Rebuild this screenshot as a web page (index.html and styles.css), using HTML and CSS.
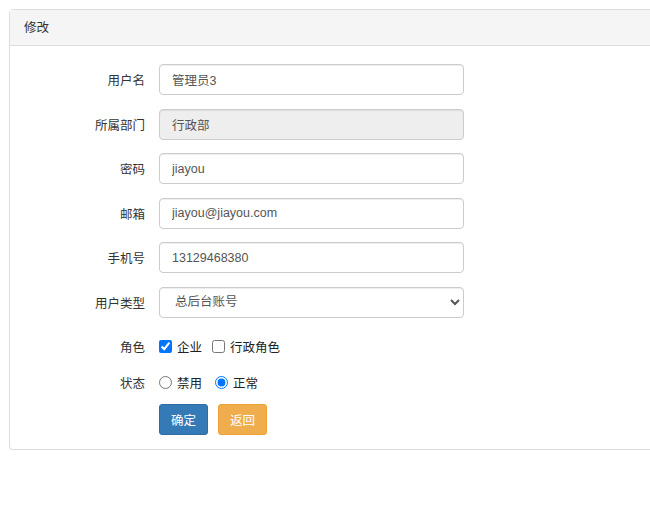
FILE: index.html
```html
<!DOCTYPE html>
<html lang="zh">
<head>
<meta charset="utf-8">
<title>修改</title>
<link rel="stylesheet" href="styles.css">
</head>
<body>
<div class="panel">
  <div class="panel-heading">修改</div>
  <form class="panel-body">
    <div class="row">
      <label class="label">用户名</label>
      <input class="control" type="text" value="管理员3">
    </div>
    <div class="row">
      <label class="label">所属部门</label>
      <input class="control" type="text" value="行政部" disabled>
    </div>
    <div class="row">
      <label class="label">密码</label>
      <input class="control" type="text" value="jiayou">
    </div>
    <div class="row">
      <label class="label">邮箱</label>
      <input class="control" type="text" value="jiayou@jiayou.com">
    </div>
    <div class="row">
      <label class="label">手机号</label>
      <input class="control" type="text" value="13129468380">
    </div>
    <div class="row">
      <label class="label">用户类型</label>
      <select class="control select">
        <option>总后台账号</option>
      </select>
    </div>
    <div class="row check-row">
      <label class="label">角色</label>
      <div class="options">
        <label class="opt"><input type="checkbox" checked>企业</label>
        <label class="opt"><input type="checkbox">行政角色</label>
      </div>
    </div>
    <div class="row check-row">
      <label class="label">状态</label>
      <div class="options radios">
        <label class="opt"><input type="radio" name="st">禁用</label>
        <label class="opt"><input type="radio" name="st" checked>正常</label>
      </div>
    </div>
    <div class="row btn-row">
      <span class="label"></span>
      <div class="buttons">
        <button type="button" class="btn btn-primary">确定</button>
        <button type="button" class="btn btn-warning">返回</button>
      </div>
    </div>
  </form>
</div>
</body>
</html>
```
FILE: styles.css
```css
html, body {
  overflow: hidden;
}
body {
  margin: 9px 0 0 9px;
  font-family: "Liberation Sans", "Noto Sans CJK SC", sans-serif;
  font-size: 12.5px;
  color: #333;
  background: #fff;
}
.panel {
  width: 660px;
  border: 1px solid #ddd;
  border-radius: 4px 0 0 4px;
  box-shadow: 0 1px 1px rgba(0,0,0,0.05);
}
.panel-heading {
  height: 36px;
  box-sizing: border-box;
  padding: 2px 14px 0;
  line-height: 33px;
  background: #f5f5f5;
  border-bottom: 1px solid #ddd;
  color: #333;
}
.panel-body {
  display: flex;
  flex-direction: column;
  padding: 18px 0 14px 0;
}
.row {
  display: flex;
  align-items: center;
  height: 31px;
  margin-bottom: 13.5px;
}
.label {
  width: 135px;
  margin-right: 14px;
  text-align: right;
  color: #333;
  flex: none;
}
.control {
  box-sizing: border-box;
  width: 305px;
  height: 31px;
  padding: 0 12px;
  border: 1px solid #ccc;
  border-radius: 4px;
  box-shadow: inset 0 1px 1px rgba(0,0,0,0.075);
  font-family: inherit;
  font-size: 12.5px;
  color: #555;
  background: #fff;
  outline: none;
}
.control:disabled {
  background: #eee;
  color: #555;
}
.select {
  padding: 0 8px 0 11px;
}
.check-row {
  height: 30px;
  margin-bottom: 6px;
}
.options {
  display: flex;
  align-items: center;
  gap: 10px;
  color: #222;
}
.radios {
  gap: 13px;
}
.opt {
  display: flex;
  align-items: center;
  gap: 5px;
}
.opt input {
  margin: 0;
  width: 13px;
  height: 13px;
}
.btn-row {
  margin-top: 1px;
  margin-bottom: 0;
}
.buttons {
  display: flex;
  gap: 10px;
}
.btn {
  height: 31px;
  padding: 0 11px;
  border: 1px solid transparent;
  border-radius: 3px;
  font-family: inherit;
  font-size: 12.5px;
  color: #fff;
}
.btn-primary {
  background: #337ab7;
  border-color: #2e6da4;
}
.btn-warning {
  background: #f0ad4e;
  border-color: #eea236;
}
```
